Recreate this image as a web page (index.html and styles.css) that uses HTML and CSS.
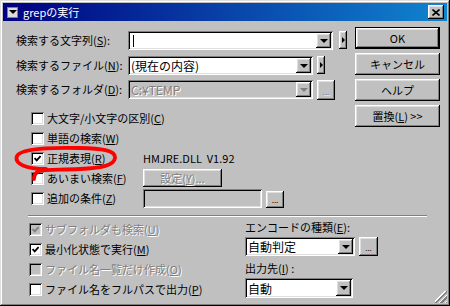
FILE: index.html
```html
<!DOCTYPE html>
<html lang="ja">
<head>
<meta charset="utf-8">
<title>grepの実行</title>
<link rel="stylesheet" href="styles.css">
</head>
<body>
<div class="window">
  <div class="titlebar">
    <span class="sysicon"><span class="tri-down"></span></span>
    <span class="title">grepの実行</span>
    <span class="close raised">
      <svg width="8" height="7" viewBox="0 0 8 7"><path d="M0.5 0.5 L7.5 6.5 M7.5 0.5 L0.5 6.5" stroke="#000" stroke-width="1.6" fill="none"/></svg>
    </span>
  </div>

  <div class="main">
    <div class="leftcol">
      <div class="fields">
        <div class="frow">
          <span class="flabel">検索する文字列(<u>S</u>):</span>
          <div class="combo sunken c1"><span class="ctext"><span class="caret"></span></span><span class="drop raised"><span class="tri-down"></span></span></div>
          <span class="minibtn raised m1"><span class="tri-right"></span></span>
        </div>
        <div class="frow r2">
          <span class="flabel">検索するファイル(<u>N</u>):</span>
          <div class="combo sunken c2"><span class="ctext">(現在の内容)</span><span class="drop raised"><span class="tri-down"></span></span></div>
          <span class="minibtn raised m2"><span class="tri-right"></span></span>
        </div>
        <div class="frow r3">
          <span class="flabel">検索するフォルダ(<u>D</u>):</span>
          <div class="combo sunken c2 disabled"><span class="ctext dis">C:¥TEMP</span><span class="drop raised"><span class="tri-down grey"></span></span></div>
          <span class="dots raised d1"><span class="dis">...</span></span>
        </div>
      </div>

      <div class="options">
        <div class="orow"><span class="ocheck"><span class="cb sunken"></span><span class="otext">大文字/小文字の区別(<u>C</u>)</span></span></div>
        <div class="orow"><span class="cb sunken"></span><span class="otext">単語の検索(<u>W</u>)</span></div>
        <div class="orow"><span class="ocheck"><span class="cb sunken"><svg class="chk" width="7" height="7" viewBox="0 0 7 7"><path d="M0.6 3 L2.7 5.3 L6.6 1" stroke="#000" stroke-width="1.8" fill="none"/></svg></span><span class="otext">正規表現(<u>R</u>)</span></span><span class="dll">HMJRE.DLL&nbsp; V1.92</span></div>
        <div class="orow"><span class="ocheck"><span class="cb sunken"></span><span class="otext">あいまい検索(<u>F</u>)</span></span><span class="btn raised setbtn"><span class="dis">設定(<u>Y</u>)...</span></span></div>
        <div class="orow"><span class="ocheck"><span class="cb sunken"></span><span class="otext">追加の条件(<u>Z</u>)</span></span><span class="tbox sunken"></span><span class="dots raised d2">...</span></div>
      </div>
    </div>

    <div class="buttons">
      <span class="btn raised default">OK</span>
      <span class="btn raised">キャンセル</span>
      <span class="btn raised">ヘルプ</span>
      <span class="btn raised">置換(<u>L</u>) &gt;&gt;</span>
    </div>
  </div>

  <div class="sep"></div>

  <div class="bottom">
    <div class="bopts">
      <div class="orow"><span class="cb sunken off"><svg class="chk" width="7" height="7" viewBox="0 0 7 7"><path d="M0.6 3 L2.7 5.3 L6.6 1" stroke="#808080" stroke-width="1.8" fill="none"/></svg></span><span class="otext dis">サブフォルダも検索(<u>U</u>)</span></div>
      <div class="orow"><span class="cb sunken"><svg class="chk" width="7" height="7" viewBox="0 0 7 7"><path d="M0.6 3 L2.7 5.3 L6.6 1" stroke="#000" stroke-width="1.8" fill="none"/></svg></span><span class="otext">最小化状態で実行(<u>M</u>)</span></div>
      <div class="orow"><span class="cb sunken off"></span><span class="otext dis">ファイル名一覧だけ作成(<u>O</u>)</span></div>
      <div class="orow"><span class="cb sunken"></span><span class="otext">ファイル名をフルパスで出力(<u>P</u>)</span></div>
    </div>
    <div class="encode">
      <div class="elabel">エンコードの種類(<u>E</u>):</div>
      <div class="erow">
        <div class="combo sunken e1"><span class="ctext">自動判定</span><span class="drop raised"><span class="tri-down"></span></span></div>
        <span class="dots raised d3">...</span>
      </div>
      <div class="elabel l2">出力先(<u>I</u>) :</div>
      <div class="combo sunken e2"><span class="ctext">自動</span><span class="drop raised"><span class="tri-down"></span></span></div>
    </div>
  </div>

  <span class="grip"></span>

  <svg class="redmark" width="106" height="40" viewBox="13 144 106 40">
    <path d="M46 169 C26 169, 14 164, 17 156 C21 147.5, 60 147.5, 80 148 C100 148.5, 116 150, 115 158 C114 166, 100 168, 80 169 C60 170, 45 169, 39 171 C35 173, 34 176, 34 179" stroke="#ff0000" stroke-width="3.8" fill="none" stroke-linecap="round" stroke-linejoin="round"/>
  </svg>
</div>
</body>
</html>
```

FILE: styles.css
```css
body {
  margin: 0;
  background: #c0c0c0;
}

.window {
  position: relative;
  width: 450px;
  height: 306px;
  box-sizing: border-box;
  padding: 3px;
  background: #c0c0c0;
  box-shadow: inset -1px -1px #000, inset 1px 1px #dfdfdf, inset -2px -2px #808080, inset 2px 2px #fff;
  font-family: "Noto Sans CJK JP", "Noto Sans", sans-serif;
  font-size: 11px;
  color: #000;
  overflow: hidden;
}

u { text-decoration: underline; }

.raised {
  background: #c0c0c0;
  box-shadow: inset -1px -1px #000, inset 1px 1px #fff, inset -2px -2px #808080, inset 2px 2px #dfdfdf;
}

.sunken {
  box-shadow: inset 1px 1px #808080, inset -1px -1px #fff, inset 2px 2px #000, inset -2px -2px #dfdfdf;
}

.dis {
  color: #808080;
  text-shadow: 1px 1px #fff;
}

/* title bar */
.titlebar {
  height: 18px;
  display: flex;
  align-items: center;
  padding: 0 3px 0 4px;
  background: linear-gradient(90deg, #000080, #1084d0);
  color: #fff;
}

.sysicon {
  width: 11px;
  height: 11px;
  box-sizing: border-box;
  border: 1px solid #808080;
  display: flex;
  align-items: center;
  justify-content: center;
  background: #dcdcdc;
}

.title {
  margin-left: 5px;
  font-size: 11px;
  line-height: 18px;
}

.close {
  margin-left: auto;
  width: 16px;
  height: 14px;
  display: flex;
  align-items: center;
  justify-content: center;
}

.tri-down {
  width: 0;
  height: 0;
  border-left: 4px solid transparent;
  border-right: 4px solid transparent;
  border-top: 4px solid #000;
}

.tri-down.grey {
  border-top-color: #808080;
}

.tri-right {
  width: 0;
  height: 0;
  border-top: 3px solid transparent;
  border-bottom: 3px solid transparent;
  border-left: 3px solid #000;
}

/* main area */
.main {
  display: flex;
}

.leftcol {
  flex: 1;
}

.fields {
  margin-top: 10px;
  padding-left: 13px;
}

.frow {
  display: flex;
  align-items: flex-start;
  height: 19px;
}

.frow.r2 { margin-top: 6px; }
.frow.r3 { margin-top: 5px; }

.flabel {
  width: 112px;
  flex: none;
  line-height: 19px;
  white-space: nowrap;
}

.combo {
  display: flex;
  align-items: stretch;
  height: 19px;
  box-sizing: border-box;
  padding: 2px;
  background: #fff;
}

.combo.disabled {
  background: #c0c0c0;
}

.c1 { width: 205px; }
.c2 { width: 185px; }
.e1 { width: 110px; }
.e2 { width: 108px; height: 20px; }

.ctext {
  flex: 1;
  display: flex;
  align-items: center;
  padding-left: 1px;
  line-height: 15px;
  font-size: 12px;
  white-space: nowrap;
  overflow: hidden;
}

.caret {
  width: 1px;
  height: 12px;
  margin-left: 2px;
  background: #000;
}

.drop {
  width: 15px;
  display: flex;
  align-items: center;
  justify-content: center;
}

.minibtn {
  width: 8px;
  height: 18px;
  display: flex;
  align-items: center;
  justify-content: center;
}

.m1 { margin-left: 6px; }
.m2 { margin-left: 4px; }

.dots {
  display: flex;
  align-items: flex-end;
  justify-content: center;
  box-sizing: border-box;
  padding-bottom: 4px;
  font-size: 8px;
  line-height: 8px;
}

.d1 { width: 18px; height: 20px; margin-left: 4px; }
.d2 { width: 18px; height: 17px; margin-left: 4px; margin-top: 2px; }
.d3 { width: 19px; height: 19px; margin-left: 4px; }

/* options */
.options {
  margin-top: 9px;
  padding-left: 28px;
}

.orow {
  display: flex;
  align-items: center;
  height: 20px;
  white-space: nowrap;
}

.ocheck {
  width: 112px;
  flex: none;
  display: flex;
  align-items: center;
}

.cb {
  width: 13px;
  height: 13px;
  flex: none;
  box-sizing: border-box;
  background: #fff;
  display: flex;
  align-items: center;
  justify-content: center;
}

.cb.off {
  background: #c0c0c0;
}

.otext {
  margin-left: 3px;
  line-height: 20px;
}

.dll {
  line-height: 20px;
}

.btn {
  display: flex;
  align-items: center;
  justify-content: center;
  box-sizing: border-box;
  white-space: nowrap;
}

.setbtn {
  width: 79px;
  height: 18px;
}

.tbox {
  width: 119px;
  height: 19px;
  box-sizing: border-box;
  align-self: flex-end;
}

/* buttons column */
.buttons {
  width: 85px;
  margin-top: 6px;
  margin-right: 7px;
  display: flex;
  flex-direction: column;
  gap: 4px;
}

.buttons .btn {
  height: 22px;
}

.buttons .default {
  border: 1px solid #000;
}

/* separator */
.sep {
  margin: 7px 0 0 25px;
  width: 399px;
  height: 0;
  border-top: 1px solid #808080;
  border-bottom: 1px solid #fff;
}

/* bottom */
.bottom {
  display: flex;
}

.bopts {
  width: 216px;
  margin-top: 2px;
  padding-left: 26px;
}

.encode {
  display: flex;
  flex-direction: column;
}

.elabel {
  height: 20px;
  line-height: 20px;
  white-space: nowrap;
}

.elabel.l2 {
  margin-top: 2px;
}

.erow {
  display: flex;
}

.grip {
  position: absolute;
  right: 3px;
  bottom: 3px;
  width: 12px;
  height: 12px;
  background: linear-gradient(135deg, transparent 0 40%, #fff 40% 46%, #808080 46% 58%, transparent 58% 64%, #fff 64% 70%, #808080 70% 82%, transparent 82% 88%, #fff 88% 94%, #808080 94% 100%);
}

.redmark {
  position: absolute;
  left: 13px;
  top: 144px;
  pointer-events: none;
}
```
